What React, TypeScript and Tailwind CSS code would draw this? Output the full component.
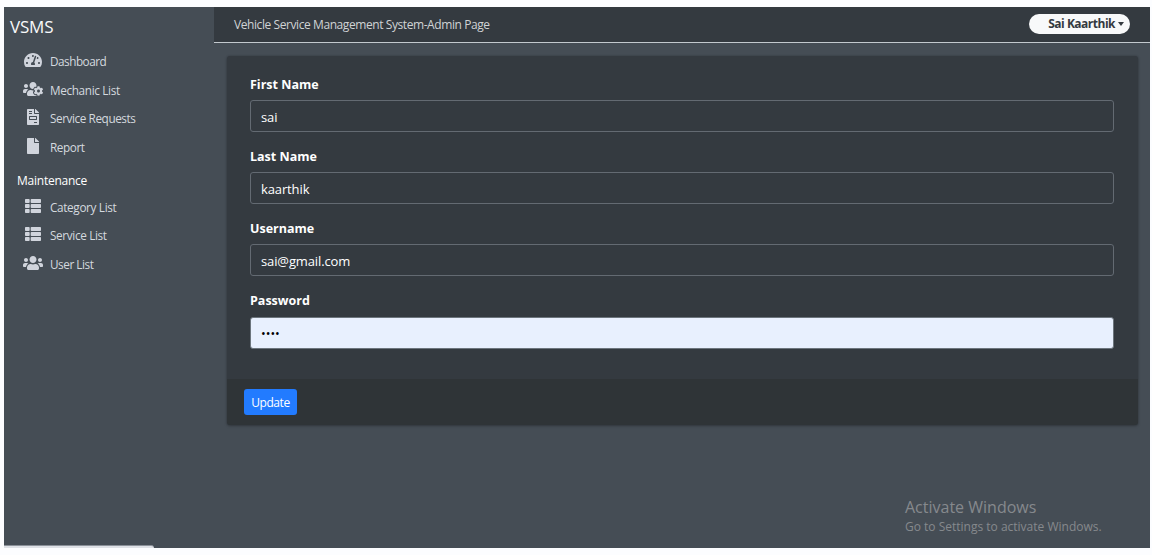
import type { ComponentType } from "react";
import {
  FaFile,
  FaFileInvoice,
  FaTachometerAlt,
  FaThList,
  FaUsers,
  FaUsersCog,
} from "react-icons/fa";

type NavEntry = {
  label: string;
  icon: ComponentType<{ className?: string }>;
  tracking: string;
};

const mainNav: NavEntry[] = [
  { label: "Dashboard", icon: FaTachometerAlt, tracking: "tracking-[-0.49px]" },
  { label: "Mechanic List", icon: FaUsersCog, tracking: "tracking-[-0.35px]" },
  { label: "Service Requests", icon: FaFileInvoice, tracking: "tracking-[-0.42px]" },
  { label: "Report", icon: FaFile, tracking: "tracking-[-0.42px]" },
];

const maintenanceNav: NavEntry[] = [
  { label: "Category List", icon: FaThList, tracking: "tracking-[-0.34px]" },
  { label: "Service List", icon: FaThList, tracking: "tracking-[-0.35px]" },
  { label: "User List", icon: FaUsers, tracking: "tracking-[-0.45px]" },
];

const fields = [
  { label: "First Name", value: "sai", type: "text" },
  { label: "Last Name", value: "kaarthik", type: "text" },
  { label: "Username", value: "sai@gmail.com", type: "text" },
  { label: "Password", value: "1234", type: "password" },
];

function NavList({ items }: { items: NavEntry[] }) {
  return (
    <ul>
      {items.map(({ label, icon: Icon, tracking }) => (
        <li key={label} className="flex h-[28.5px] items-center gap-[7px] pl-[19px]">
          <Icon className="-mt-[3px] h-4 w-5 shrink-0 text-[#d0d4dc]" />
          <span className={`whitespace-nowrap pt-px text-[11.75px] text-[#d4d9df] ${tracking}`}>{label}</span>
        </li>
      ))}
    </ul>
  );
}

export default function App() {
  return (
    <div className="h-[555px] w-[1152px] overflow-hidden bg-[#fcfdff] pl-1 pr-[2px] pt-[7px] font-['Open_Sans','Noto_Sans',sans-serif]">
      <div className="relative flex h-[541px] bg-[#454d55]">
        <aside className="w-[210px] shrink-0">
          <div className="flex h-[40.5px] items-center pb-px pl-[6px] text-[17px] tracking-[-0.2px] text-[#f8f9fa]">VSMS</div>
          <NavList items={mainNav} />
          <h2 className="flex h-[31px] items-center pl-[13px] pt-[8px] text-[12px] tracking-[-0.24px] text-white">
            Maintenance
          </h2>
          <div className="pt-[0.4px]">
            <NavList items={maintenanceNav} />
          </div>
        </aside>
        <div className="min-w-0 flex-1">
          <header className="flex h-9 items-center justify-between border-b border-[#c3c9ce] bg-[#343a40] pl-5 pr-5">
            <h1 className="text-[12px] tracking-[-0.42px] text-[#d0d3d5]">
              Vehicle Service Management System-Admin Page
            </h1>
            <button className="-mt-[2px] flex h-5 w-[101px] items-center justify-end gap-[3px] rounded-full bg-[#f8f9fa] pr-[6px] text-[12px] font-bold tracking-[-0.5px] text-[#343a40]">
              <span className="whitespace-nowrap pt-px">Sai Kaarthik</span>
              <span className="border-x-[3px] border-t-[4px] border-x-transparent border-t-[#343a40]" />
            </button>
          </header>
          <main className="pl-[13px] pr-3 pt-[13px]">
            <form className="overflow-hidden rounded-[3px] bg-[#343a40] shadow-[0_0_2px_rgba(0,0,0,0.2),0_1px_3px_rgba(0,0,0,0.25)]">
              <div className="flex h-[323px] flex-col gap-[8.2px] pl-[23px] pr-6 pt-[16px]">
                {fields.map(({ label, value, type }) => (
                  <label key={label} className="block">
                    <span className="flex h-6 items-center pt-[2px] text-[12.5px] font-bold text-white">{label}</span>
                    <input
                      type={type}
                      defaultValue={value}
                      className={
                        type === "password"
                          ? "mb-1 mt-1 block h-8 w-full rounded-[3px] border border-[#6c757d] bg-[#e8f0fe] px-[10px] pt-[2px] text-[12.5px] text-black outline-none"
                          : "mb-1 mt-1 block h-8 w-full rounded-[3px] border border-[#636a72] bg-[#343a40] px-[10px] pt-px text-[13px] tracking-[-0.12px] text-white outline-none"
                      }
                    />
                  </label>
                ))}
              </div>
              <footer className="flex h-[46px] items-center bg-[#2f3437] pl-[17px]">
                <button
                  type="button"
                  className="h-[26px] w-[53px] rounded-[3px] bg-[#227bff] pt-px text-[12px] tracking-[-0.45px] text-white"
                >
                  Update
                </button>
              </footer>
            </form>
          </main>
        </div>
        <div className="absolute bottom-3 left-[901px] whitespace-nowrap text-[#85898d]">
          <p className="pb-px text-[16px] leading-5">Activate Windows</p>
          <p className="text-[12px] leading-[18px]">Go to Settings to activate Windows.</p>
        </div>
        <div className="absolute bottom-0 left-0 h-[3px] w-[150px] rounded-tr-[3px] border-t border-[#8b9199] bg-[#dee1e6]" />
      </div>
    </div>
  );
}
